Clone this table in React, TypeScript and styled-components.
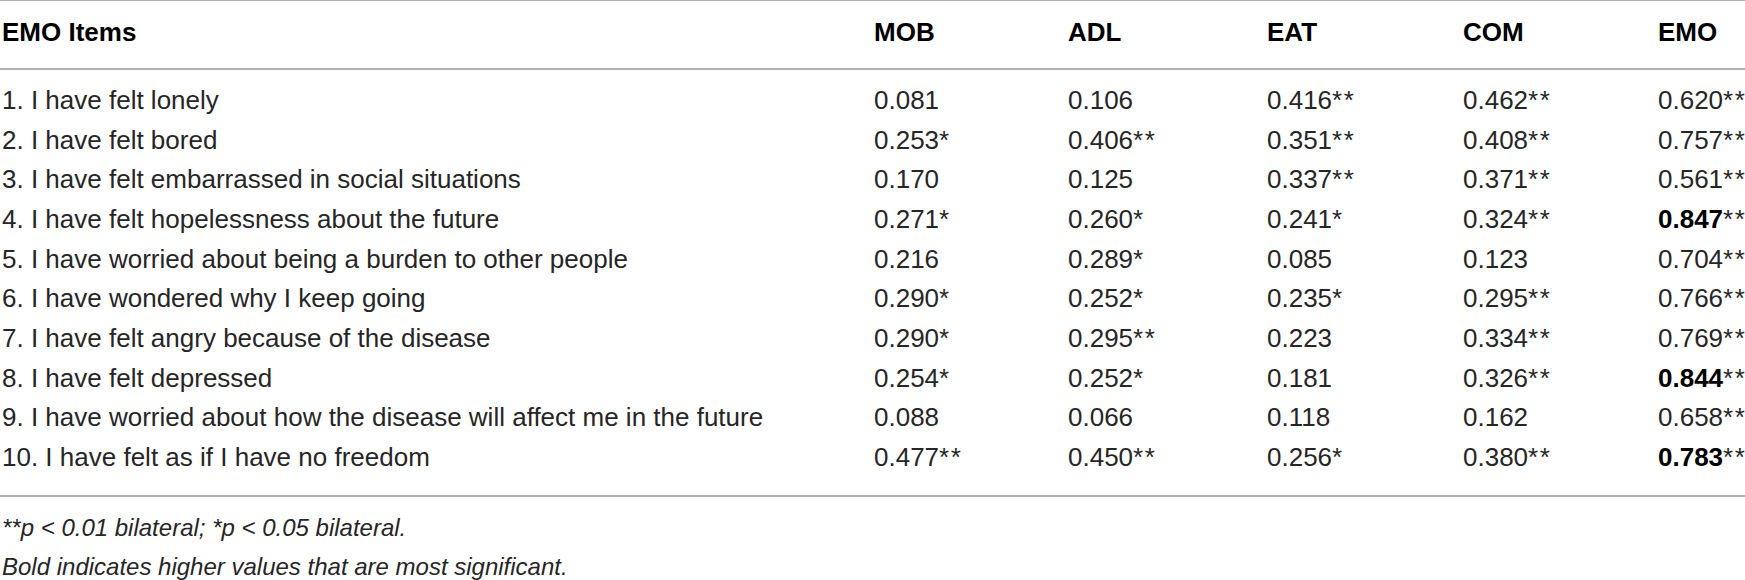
import React from "react";
import styled, { createGlobalStyle } from "styled-components";

const Global = createGlobalStyle`
  html, body {
    margin: 0;
    padding: 0;
    background: #ffffff;
    overflow: hidden;
  }
  body {
    font-family: "Liberation Sans", Arial, Helvetica, sans-serif;
    color: #262626;
  }
`;

const Page = styled.div`
  width: 1745px;
  height: 580px;
  overflow: hidden;
  background: #fff;
`;

const Table = styled.div`
  border-top: 1px solid #b0b0b0;
  border-bottom: 2px solid #b0b0b0;
  width: 1745px;
`;

const cols = "872px 194px 199px 196px 195px 1fr";

const HeaderRow = styled.div`
  display: grid;
  grid-template-columns: ${cols};
  padding: 16.5px 0 21.5px 2px;
  border-bottom: 2px solid #b0b0b0;
  font-size: 26px;
  line-height: 29px;
  font-weight: 700;
  color: #000;
`;

const HeaderCell = styled.div`
  white-space: nowrap;
`;

const Body = styled.div`
  padding: 11px 0 17px 0;
`;

const Row = styled.div`
  display: grid;
  grid-template-columns: ${cols};
  padding-left: 2px;
  height: 39.67px;
  line-height: 39.67px;
  font-size: 26px;
`;

const Cell = styled.div`
  white-space: nowrap;
`;

const Strong = styled.span`
  font-weight: 700;
  color: #000;
`;

const Stars = styled.span`
  letter-spacing: 1.5px;
`;

const Notes = styled.div`
  padding: 11px 0 0 2px;
`;

const Note = styled.div`
  font-size: 24px;
  line-height: 39px;
  font-style: italic;
  white-space: nowrap;
`;

type Val = { v: string; s?: string; b?: boolean };

const parse = (str: string): Val => {
  const bold = str.startsWith("!");
  const clean = bold ? str.slice(1) : str;
  const mm = clean.match(/^([\d.]+)(\**)$/);
  if (mm) return { v: mm[1], s: mm[2], b: bold };
  return { v: clean };
};

const rows: { label: string; vals: string[] }[] = [
  { label: "1. I have felt lonely", vals: ["0.081", "0.106", "0.416**", "0.462**", "0.620**"] },
  { label: "2. I have felt bored", vals: ["0.253*", "0.406**", "0.351**", "0.408**", "0.757**"] },
  { label: "3. I have felt embarrassed in social situations", vals: ["0.170", "0.125", "0.337**", "0.371**", "0.561**"] },
  { label: "4. I have felt hopelessness about the future", vals: ["0.271*", "0.260*", "0.241*", "0.324**", "!0.847**"] },
  { label: "5. I have worried about being a burden to other people", vals: ["0.216", "0.289*", "0.085", "0.123", "0.704**"] },
  { label: "6. I have wondered why I keep going", vals: ["0.290*", "0.252*", "0.235*", "0.295**", "0.766**"] },
  { label: "7. I have felt angry because of the disease", vals: ["0.290*", "0.295**", "0.223", "0.334**", "0.769**"] },
  { label: "8. I have felt depressed", vals: ["0.254*", "0.252*", "0.181", "0.326**", "!0.844**"] },
  { label: "9. I have worried about how the disease will affect me in the future", vals: ["0.088", "0.066", "0.118", "0.162", "0.658**"] },
  { label: "10. I have felt as if I have no freedom", vals: ["0.477**", "0.450**", "0.256*", "0.380**", "!0.783**"] },
];

const headers = ["EMO Items", "MOB", "ADL", "EAT", "COM", "EMO"];

const ValueCell: React.FC<{ raw: string }> = ({ raw }) => {
  const d = parse(raw);
  return (
    <Cell>
      {d.b ? <Strong>{d.v}</Strong> : d.v}
      {d.s ? <Stars>{d.s}</Stars> : null}
    </Cell>
  );
};

export default function App() {
  return (
    <Page>
      <Global />
      <Table>
        <HeaderRow>
          {headers.map((h) => (
            <HeaderCell key={h}>{h}</HeaderCell>
          ))}
        </HeaderRow>
        <Body>
          {rows.map((r) => (
            <Row key={r.label}>
              <Cell>{r.label}</Cell>
              {r.vals.map((x, i) => (
                <ValueCell key={i} raw={x} />
              ))}
            </Row>
          ))}
        </Body>
      </Table>
      <Notes>
        <Note>**p &lt; 0.01 bilateral; *p &lt; 0.05 bilateral.</Note>
        <Note>Bold indicates higher values that are most significant.</Note>
      </Notes>
    </Page>
  );
}
